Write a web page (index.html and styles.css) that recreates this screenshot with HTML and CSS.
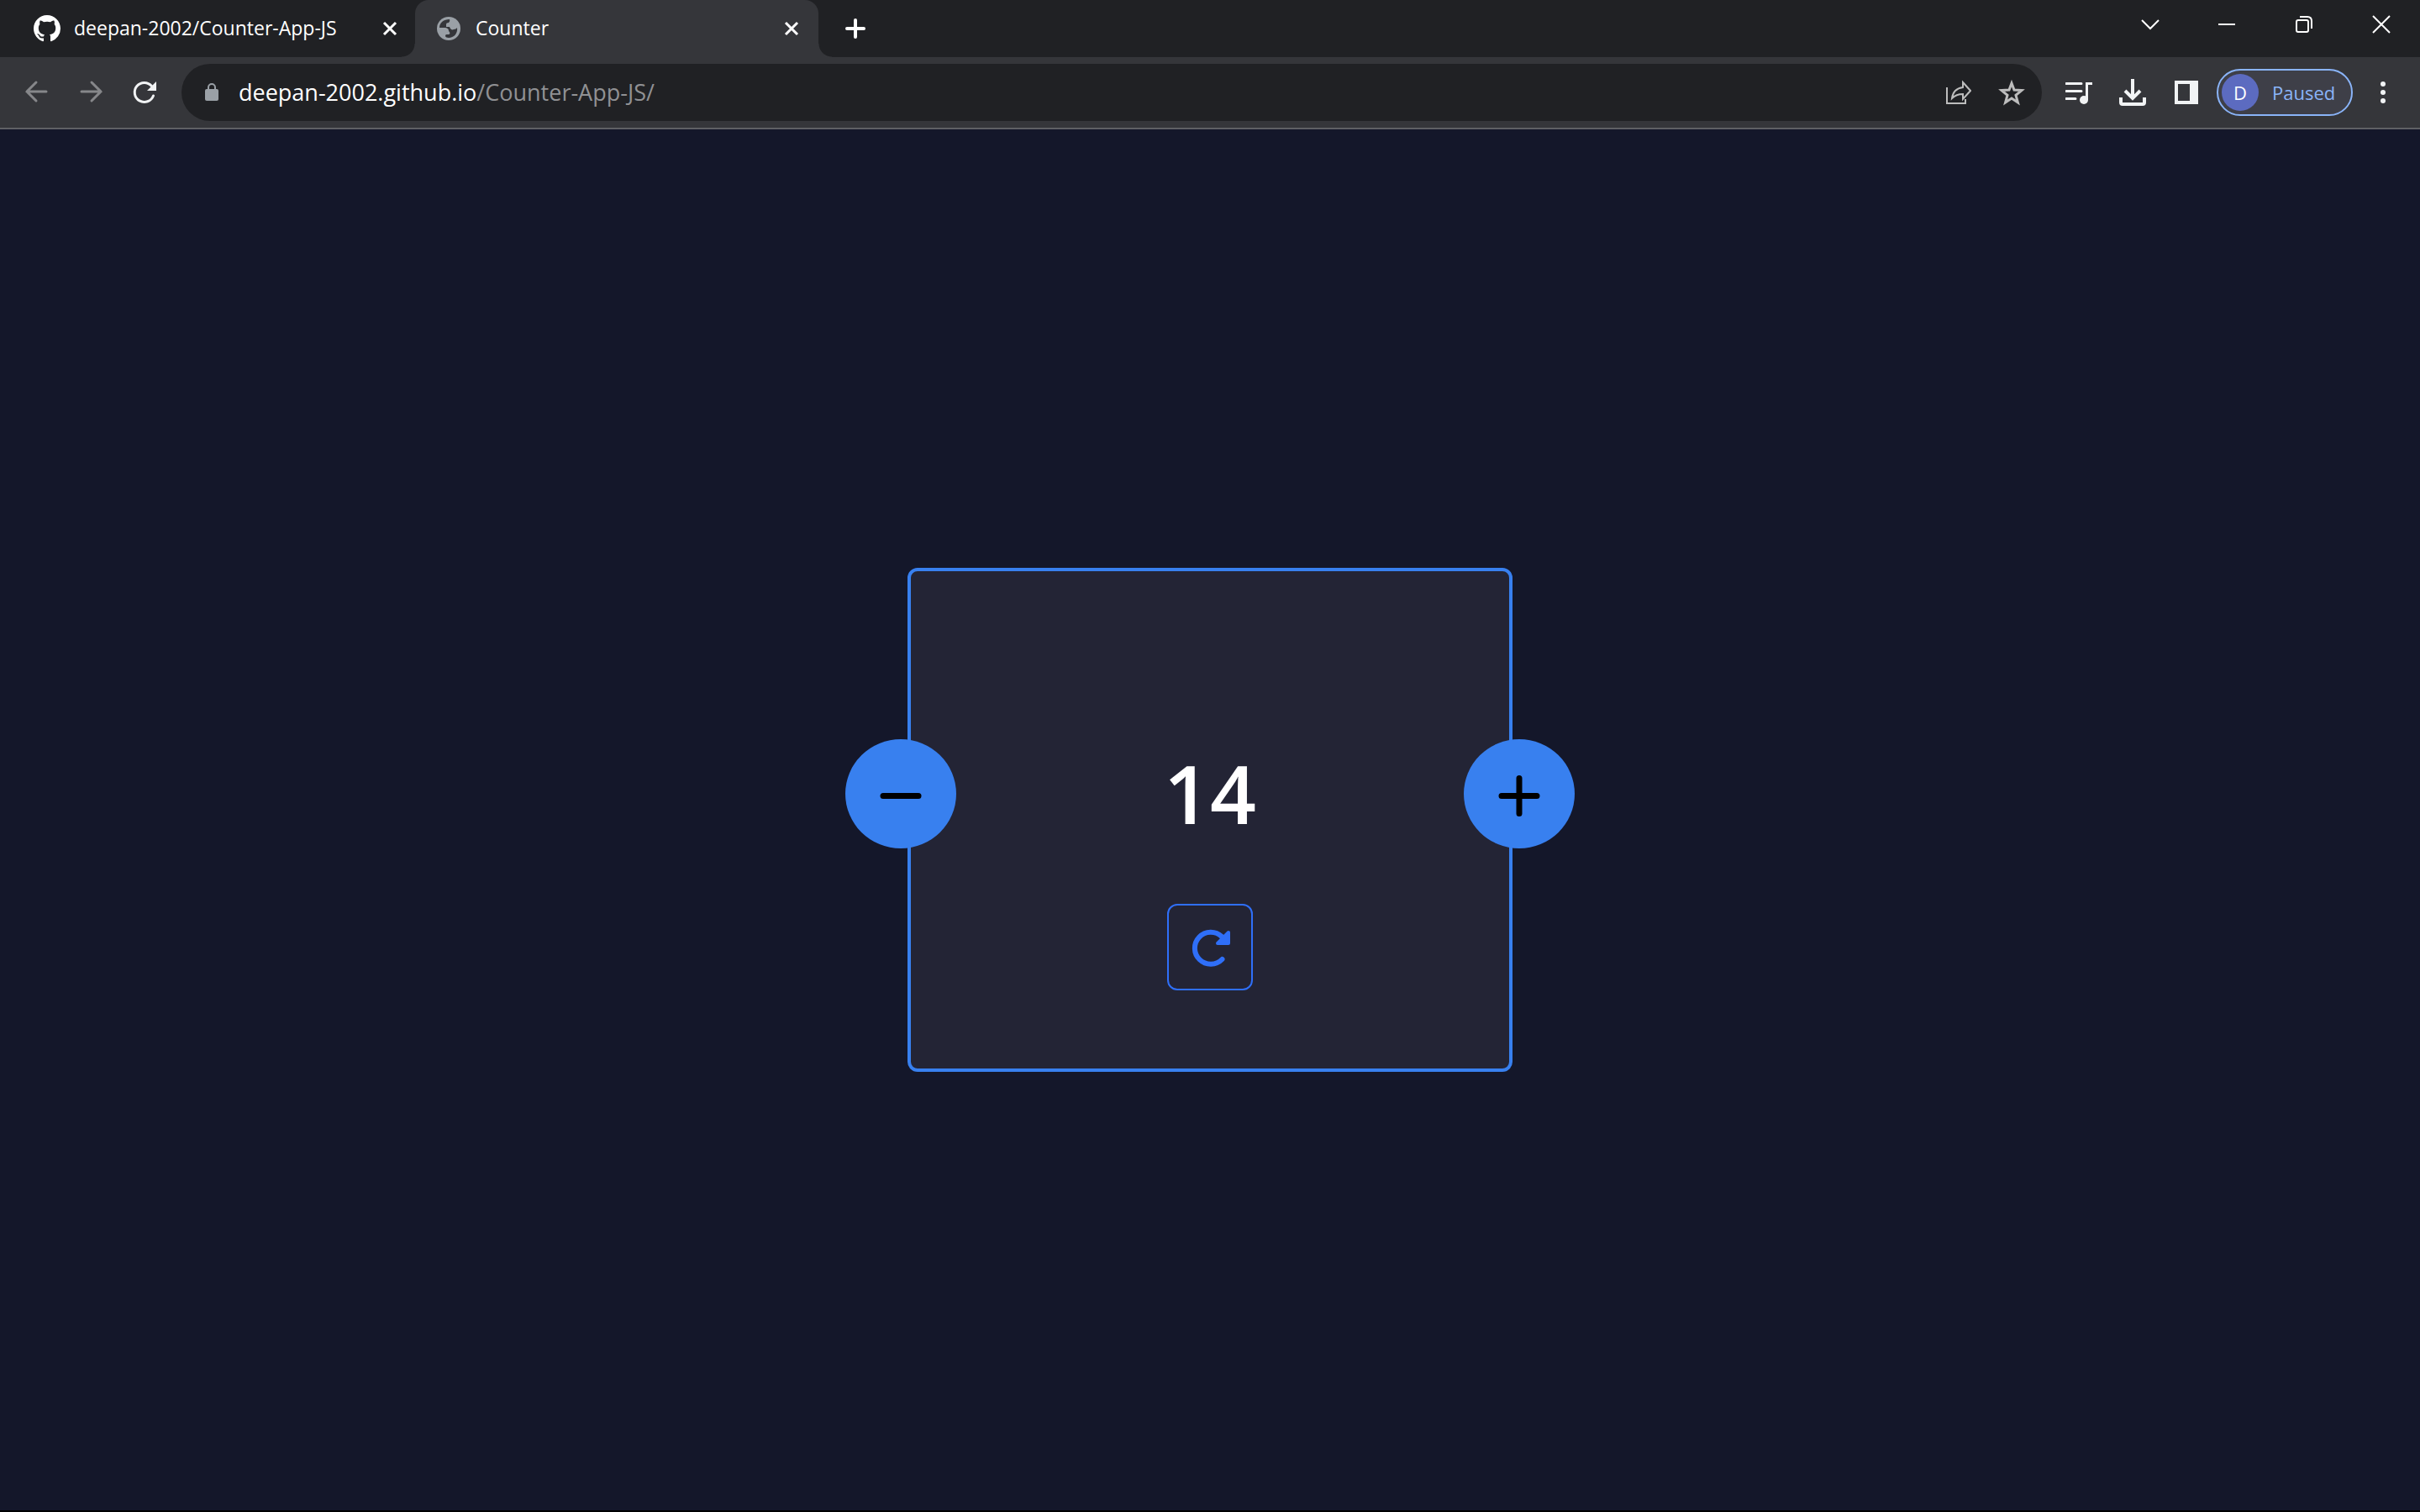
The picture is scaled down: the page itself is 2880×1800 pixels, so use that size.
FILE: index.html
```html
<!DOCTYPE html>
<html lang="en">
<head>
<meta charset="utf-8">
<title>Counter</title>
<link rel="stylesheet" href="styles.css">
</head>
<body>
<header class="browser">
  <div class="tabstrip">
    <div class="tab">
      <svg class="favicon" width="32" height="32" viewBox="0 0 16 16" fill="#fff"><path d="M8 0C3.58 0 0 3.58 0 8c0 3.54 2.29 6.53 5.47 7.59.4.07.55-.17.55-.38 0-.19-.01-.82-.01-1.49-2.01.37-2.53-.49-2.69-.94-.09-.23-.48-.94-.82-1.13-.28-.15-.68-.52-.01-.53.63-.01 1.08.58 1.23.82.72 1.21 1.87.87 2.33.66.07-.52.28-.87.51-1.07-1.78-.2-3.64-.89-3.64-3.95 0-.87.31-1.59.82-2.15-.08-.2-.36-1.02.08-2.12 0 0 .67-.21 2.2.82.64-.18 1.32-.27 2-.27s1.36.09 2 .27c1.53-1.04 2.2-.82 2.2-.82.44 1.1.16 1.92.08 2.12.51.56.82 1.27.82 2.15 0 3.07-1.87 3.75-3.65 3.95.29.25.54.73.54 1.48 0 1.07-.01 1.93-.01 2.2 0 .21.15.46.55.38A8.01 8.01 0 0 0 16 8c0-4.42-3.58-8-8-8z"/></svg>
      <a class="tab-title" href="#">deepan-2002/Counter-App-JS</a>
      <button class="icon-button tab-close" aria-label="Close tab"><svg width="32" height="32" viewBox="0 0 32 32"><path d="M9 9l14 14M23 9L9 23" stroke="#fff" stroke-width="3"/></svg></button>
    </div>
    <div class="tab tab-active">
      <svg class="favicon" width="32" height="32" viewBox="0 0 32 32"><circle cx="16" cy="16" r="14" fill="#9aa0a6"/><path d="M5 15C5 9 10 5 17 5q1 2-1 4-3 0-3 2v3h4c1 3 3 4 5 3 2 0 3-1 4-2 1 7-4 12-10 12-2 0-4-1-4-2 0-2 1-2 3-2 3 0 3-2 1-4 0-3-2-4-5-4z" fill="#35363a"/></svg>
      <a class="tab-title" href="#">Counter</a>
      <button class="icon-button tab-close" aria-label="Close tab"><svg width="32" height="32" viewBox="0 0 32 32"><path d="M9 9l14 14M23 9L9 23" stroke="#fff" stroke-width="3"/></svg></button>
    </div>
    <button class="icon-button new-tab" aria-label="New tab"><svg width="32" height="32" viewBox="0 0 32 32"><path d="M16 6v20M6 16h20" stroke="#fff" stroke-width="4" stroke-linecap="round"/></svg></button>
    <div class="window-controls">
      <button class="icon-button window-button" aria-label="Search tabs"><svg width="32" height="32" viewBox="0 0 32 32"><path d="M7 11l10 10 10-10" stroke="#fff" stroke-width="2" fill="none"/></svg></button>
      <button class="icon-button window-button" aria-label="Minimize"><svg width="32" height="32" viewBox="0 0 32 32"><path d="M6 16h20" stroke="#fff" stroke-width="2"/></svg></button>
      <button class="icon-button window-button" aria-label="Restore"><svg width="32" height="32" viewBox="0 0 32 32"><rect x="7" y="11" width="14" height="14" rx="2" stroke="#fff" stroke-width="2" fill="none"/><path d="M11 7h9q5 0 5 5v9" stroke="#fff" stroke-width="2" fill="none"/></svg></button>
      <button class="icon-button window-button" aria-label="Close"><svg width="32" height="32" viewBox="0 0 32 32"><path d="M6 6l20 20M26 6L6 26" stroke="#fff" stroke-width="2"/></svg></button>
    </div>
  </div>
  <nav class="toolbar">
    <button class="icon-button tool" aria-label="Back"><svg width="32" height="32" viewBox="0 0 32 32"><path d="M27 15H4M15 4L4 15l11 11" stroke="#86878a" stroke-width="3" stroke-linecap="round" fill="none"/></svg></button>
    <button class="icon-button tool" aria-label="Forward"><svg width="32" height="32" viewBox="0 0 32 32"><path d="M5 15h23M17 4l11 11-11 11" stroke="#86878a" stroke-width="3" stroke-linecap="round" fill="none"/></svg></button>
    <button class="icon-button tool" aria-label="Reload"><svg width="32" height="32" viewBox="0 0 32 32"><path d="M26.500 20A11.500 11.500 0 1 1 24.500 8.500" stroke="#f1f3f4" stroke-width="3" stroke-linecap="round" fill="none"/><path d="M30 3v11H19z" fill="#f1f3f4"/></svg></button>
    <div class="omnibox">
      <svg class="lock" width="16" height="22" viewBox="0 0 16 22"><rect y="7" width="16" height="14" rx="2" fill="#9aa0a6"/><path d="M4 8V5a4 4 0 0 1 8 0v3" stroke="#9aa0a6" stroke-width="2" fill="none"/></svg>
      <a class="url" href="#">deepan-2002.github.io<span class="url-path">/Counter-App-JS/</span></a>
      <button class="icon-button tool" aria-label="Share"><svg width="32" height="32" viewBox="0 0 32 32"><path d="M3 10v19h22v-5" stroke="#bdbdbd" stroke-width="2" fill="none"/><path d="M22 4l9 10-9 10v-6c-6 0-9 1-13 5 1-8 6-12 13-13z" stroke="#bdbdbd" stroke-width="2" fill="none"/></svg></button>
      <button class="icon-button tool" aria-label="Bookmark"><svg width="32" height="32" viewBox="0 0 32 32"><path d="M16 5l3 8 9 .6-7 5.700 2.400 8.700-7.400-5-7.400 5L11 19.300 4 13.600l9-.6z" stroke="#bdbdbd" stroke-width="3" fill="none"/></svg></button>
    </div>
    <div class="actions">
      <button class="icon-button tool" aria-label="Media controls"><svg width="32" height="32" viewBox="0 0 32 32"><path d="M1 5.500h18M1 14.500h18M1 23.500h11" stroke="#f1f3f4" stroke-width="3" stroke-linecap="round"/><path d="M25.500 25V5.500H32" stroke="#f1f3f4" stroke-width="3" fill="none"/><circle cx="22" cy="25" r="5" fill="#f1f3f4"/></svg></button>
      <button class="icon-button tool" aria-label="Downloads"><svg width="32" height="32" viewBox="0 0 32 32"><path d="M16 0v20M7 14l9 9 9-9" stroke="#f1f3f4" stroke-width="4" fill="none"/><path d="M2 22v6q0 2 2 2h24q2 0 2-2v-6" stroke="#f1f3f4" stroke-width="4" fill="none"/></svg></button>
      <button class="icon-button tool" aria-label="Side panel"><svg width="32" height="32" viewBox="0 0 32 32"><path d="M2 2h28v28H2zM6 6v20h14V6z" fill="#f1f3f4" fill-rule="evenodd"/></svg></button>
      <button class="profile"><span class="avatar">D</span>Paused</button>
      <button class="icon-button menu" aria-label="Menu"><svg width="32" height="32" viewBox="0 0 32 32" fill="#f1f3f4"><circle cx="16" cy="6" r="3"/><circle cx="16" cy="16" r="3"/><circle cx="16" cy="26" r="3"/></svg></button>
    </div>
  </nav>
</header>
<main class="page">
  <section class="card">
    <div class="counter">
      <button class="step" aria-label="Decrease"><svg width="56" height="56" viewBox="0 0 56 56"><path d="M7 27.500h42" stroke="#000" stroke-width="7" stroke-linecap="round"/></svg></button>
      <output class="value">14</output>
      <button class="step" aria-label="Increase"><svg width="56" height="56" viewBox="0 0 56 56"><path d="M7 27.500h42M28 6.500v42" stroke="#000" stroke-width="7" stroke-linecap="round"/></svg></button>
    </div>
    <button class="reset" aria-label="Reset"><svg width="48" height="48" viewBox="0 0 48 48"><path d="M38.500 38A19 19 0 1 1 38 11" stroke="#2f6ff8" stroke-width="6" stroke-linecap="round" fill="none"/><path d="M46 6v13H33z" fill="#2f6ff8" stroke="#2f6ff8" stroke-width="4" stroke-linejoin="round"/></svg></button>
  </section>
</main>
</body>
</html>
```
FILE: styles.css
```css
* { box-sizing: border-box; }

body {
  margin: 0;
  min-height: 100vh;
  display: flex;
  flex-direction: column;
  background: #14172a;
  border-bottom: 2px solid #000;
  font-family: "Open Sans", "Noto Sans", sans-serif;
  color: #fff;
}

a { color: inherit; text-decoration: none; }

button {
  margin: 0;
  padding: 0;
  border: 0;
  background: none;
  font: inherit;
  color: inherit;
}

svg { display: block; flex: none; }

.icon-button {
  display: flex;
  align-items: center;
  justify-content: center;
  flex: none;
}

/* Tab strip */
.tabstrip {
  display: flex;
  align-items: center;
  height: 68px;
  background: #202124;
}

.tab {
  display: flex;
  align-items: center;
  gap: 16px;
  width: 494px;
  height: 68px;
  padding: 0 14px 0 40px;
  font-size: 23px;
}

.tab-active {
  position: relative;
  width: 480px;
  padding: 0 16px 0 24px;
  background: #35363a;
  border-radius: 16px 16px 0 0;
}

.tab-active::before,
.tab-active::after {
  content: "";
  position: absolute;
  bottom: 0;
  width: 16px;
  height: 16px;
}

.tab-active::before {
  right: 100%;
  background: radial-gradient(circle at 0 0, #202124 15px, #35363a 16px);
}

.tab-active::after {
  left: 100%;
  background: radial-gradient(circle at 100% 0, #202124 15px, #35363a 16px);
}

.tab-title {
  flex: 1;
  padding-bottom: 2px;
  white-space: nowrap;
}

.new-tab { margin-left: 28px; }

.window-controls {
  display: flex;
  margin-left: auto;
}

.window-button { width: 92px; height: 58px; margin-bottom: 10px; }

/* Toolbar */
.toolbar {
  display: flex;
  align-items: center;
  height: 86px;
  padding: 0 12px;
  background: #35363a;
  border-bottom: 2px solid #5f6064;
}

.tool { width: 64px; height: 64px; }

.omnibox {
  display: flex;
  align-items: center;
  flex: 1;
  height: 68px;
  margin-left: 12px;
  padding: 0 4px 0 28px;
  border-radius: 34px;
  background: #202124;
}

.url {
  flex: 1;
  margin-left: 24px;
  padding-bottom: 2px;
  font-size: 27px;
  white-space: nowrap;
}

.url-path { color: #909194; }

.actions {
  display: flex;
  align-items: center;
  margin-left: 12px;
}

.profile {
  display: flex;
  align-items: center;
  gap: 16px;
  width: 162px;
  height: 56px;
  margin-left: 4px;
  padding: 0 4px;
  border: 2px solid #8ab4f8;
  border-radius: 28px;
  background: #3e3f48;
  color: #8ab4f8;
  font-size: 22px;
}

.avatar {
  display: flex;
  align-items: center;
  justify-content: center;
  width: 44px;
  height: 44px;
  border-radius: 50%;
  background: #5c6bc0;
  color: #fff;
}

.menu { width: 64px; height: 64px; margin-left: 4px; }

/* Counter page */
.page {
  display: flex;
  flex: 1;
  align-items: center;
  justify-content: center;
}

.card {
  display: flex;
  flex-direction: column;
  align-items: center;
  gap: 66px;
  width: 720px;
  padding: 200px 0 93px;
  border: 4px solid #3880ef;
  border-radius: 12px;
  background: #232435;
}

.counter {
  display: flex;
  align-items: center;
  justify-content: space-between;
  align-self: stretch;
  margin: 0 -78px;
}

.step {
  display: flex;
  align-items: center;
  justify-content: center;
  width: 132px;
  height: 130px;
  padding-top: 6px;
  border-radius: 50%;
  background: #3880ef;
}

.value {
  padding-bottom: 2px;
  font-size: 96px;
  font-weight: 600;
  line-height: 128px;
}

.reset {
  display: flex;
  align-items: center;
  justify-content: center;
  width: 102px;
  height: 103px;
  border: 2px solid #2f6ff8;
  border-radius: 12px;
}
```
